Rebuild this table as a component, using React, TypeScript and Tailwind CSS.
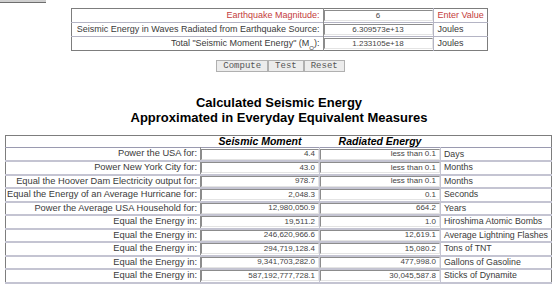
import React from "react";

const rows: [string, string, string, string][] = [
  ["Power the USA for:", "4.4", "less than 0.1", "Days"],
  ["Power New York City for:", "43.0", "less than 0.1", "Months"],
  ["Equal the Hoover Dam Electricity output for:", "978.7", "less than 0.1", "Months"],
  ["Equal the Energy of an Average Hurricane for:", "2,048.3", "0.1", "Seconds"],
  ["Power the Average USA Household for:", "12,980,050.9", "664.2", "Years"],
  ["Equal the Energy in:", "19,511.2", "1.0", "Hiroshima Atomic Bombs"],
  ["Equal the Energy in:", "246,620,966.6", "12,619.1", "Average Lightning Flashes"],
  ["Equal the Energy in:", "294,719,128.4", "15,080.2", "Tons of TNT"],
  ["Equal the Energy in:", "9,341,703,282.0", "477,998.0", "Gallons of Gasoline"],
  ["Equal the Energy in:", "587,192,777,728.1", "30,045,587.8", "Sticks of Dynamite"],
];

function Box({ children, align }: { children: React.ReactNode; align: "center" | "right" }) {
  return (
    <div
      className={
        "h-[11px] border-l border-t border-[#8c8c8c] border-r border-b border-r-[#e4e4e4] border-b-[#e4e4e4] bg-white flex items-center text-[8px] leading-none text-[#444] whitespace-nowrap " +
        (align === "center" ? "justify-center" : "justify-end pr-[3px]")
      }
    >
      {children}
    </div>
  );
}

export default function App() {
  return (
    <div className="w-[558px] h-[291px] overflow-hidden bg-white font-['Liberation_Sans',Arial,sans-serif] text-[#3a3a3a]">
      <div className="h-[3px] w-[46px] bg-[#cfcfcf] border-b border-[#6e6e6e]" />
      <table className="mx-auto mt-[5px] w-[417px] table-fixed border border-[#7d7d7d] border-collapse text-[9px] leading-none whitespace-nowrap">
        <colgroup>
          <col className="w-[252px]" />
          <col className="w-[110px]" />
          <col />
        </colgroup>
        <tbody>
          <tr className="h-[14px] border-b border-[#b4b4c4]">
            <td className="text-right pr-[3px] text-[#c43c3c] border-r border-[#8c8c8c]">Earthquake Magnitude:</td>
            <td className="px-0 border-r border-[#b4b4c4]"><Box align="center">6</Box></td>
            <td className="pl-[4px] text-[#c43c3c]">Enter Value</td>
          </tr>
          <tr className="h-[14px] border-b border-[#b4b4c4]">
            <td className="text-right pr-[3px] border-r border-[#8c8c8c]">Seismic Energy in Waves Radiated from Earthquake Source:</td>
            <td className="px-0 border-r border-[#b4b4c4]"><Box align="center">6.309573e+13</Box></td>
            <td className="pl-[4px]">Joules</td>
          </tr>
          <tr className="h-[14px]">
            <td className="text-right pr-[3px] border-r border-[#8c8c8c]">
              Total "Seismic Moment Energy" (M<sub className="text-[6px] align-[-2px]">O</sub>):
            </td>
            <td className="px-0 border-r border-[#b4b4c4]"><Box align="center">1.233105e+18</Box></td>
            <td className="pl-[4px]">Joules</td>
          </tr>
        </tbody>
      </table>

      <div className="mt-[9px] flex justify-center pl-[3px]">
        {["Compute", "Test", "Reset"].map((b) => (
          <button
            key={b}
            className="h-[12px] px-[6px] bg-[#ececec] border border-[#b0b0b0] font-['Liberation_Mono',monospace] text-[9px] leading-none text-[#555]"
          >
            {b}
          </button>
        ))}
      </div>

      <div className="mt-[23px] text-center text-black font-bold text-[13px] leading-[15px]">
        <div>Calculated Seismic Energy</div>
        <div>Approximated in Everyday Equivalent Measures</div>
      </div>

      <table className="mt-[10px] ml-[5px] w-[547px] table-fixed border border-[#7d7d7d] border-collapse text-[9.3px] leading-none whitespace-nowrap">
        <colgroup>
          <col className="w-[195px]" />
          <col className="w-[119px]" />
          <col className="w-[121px]" />
          <col />
        </colgroup>
        <tbody>
          <tr className="h-[12px] border-b border-[#9a9ab0]">
            <td />
            <td className="text-center font-bold italic text-black text-[10.5px]">Seismic Moment</td>
            <td className="text-center font-bold italic text-black text-[10.5px]">Radiated Energy</td>
            <td />
          </tr>
          {rows.map((r, i) => (
            <tr key={i} className="h-[13.5px] border-b-2 border-[#c4c4d2]">
              <td className="text-right pr-[3px] border-r border-[#8c8c8c]">{r[0]}</td>
              <td className="px-0 border-r border-[#c4c4d2]"><Box align="right">{r[1]}</Box></td>
              <td className="px-0 border-r border-[#c4c4d2]"><Box align="right">{r[2]}</Box></td>
              <td className="pl-[3px] text-[8.8px]">{r[3]}</td>
            </tr>
          ))}
        </tbody>
      </table>
    </div>
  );
}
